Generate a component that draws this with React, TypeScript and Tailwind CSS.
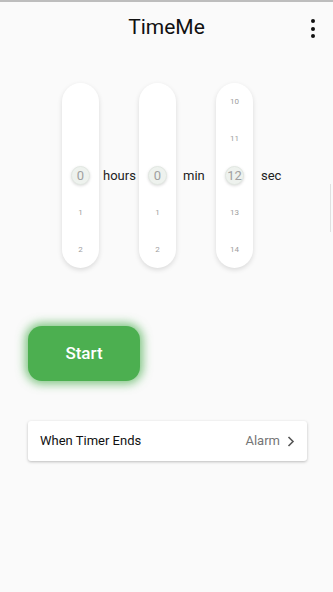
import React from 'react';

const font = { fontFamily: 'Roboto, "Noto Sans", sans-serif' };

type Col = { items: (number | null)[]; label: string; labelClass: string };

const cols: Col[] = [
    { items: [null, null, 0, 1, 2], label: 'hours', labelClass: 'pl-[4px]' },
    { items: [null, null, 0, 1, 2], label: 'min', labelClass: 'pl-[7px]' },
    { items: [10, 11, 12, 13, 14], label: 'sec', labelClass: 'pl-[8px]' },
];

const Picker: React.FC<{ col: Col }> = ({ col }) => (
    <div className="flex items-center">
        <div className="w-[37px] h-[185px] rounded-[19px] bg-white shadow-[0_2px_5px_rgba(0,0,0,0.13)] flex flex-col">
            {col.items.map((n, i) => (
                <div key={i} className="h-[37px] flex items-center justify-center">
                    {i === 2 ? (
                        <div className="w-[19px] h-[19px] rounded-full bg-[#eef2ee] border border-[#e2e8e2] shadow-[0_1px_3px_rgba(0,0,0,0.15)] flex items-center justify-center text-[13px] text-[#a0a0a0] leading-none">
                            {n}
                        </div>
                    ) : (
                        <span className="text-[8px] text-[#9e9e9e] leading-none">{n ?? ''}</span>
                    )}
                </div>
            ))}
        </div>
        <div className={`w-[40px] text-left text-[13px] text-[#212121] ${col.labelClass}`}>{col.label}</div>
    </div>
);

const App: React.FC = () => {
    return (
        <div className="relative w-[333px] h-[592px] bg-[#fafafa] overflow-hidden" style={font}>
            <div className="h-[2px] bg-[#bdbdbd]" />

            {/* App bar */}
            <div className="relative h-[52px] flex items-center justify-center">
                <span className="text-[21px] text-[#111] -mt-[1px]">TimeMe</span>
                <div className="absolute right-[18px] top-[17px] flex flex-col gap-[3.5px]">
                    <span className="w-[4px] h-[4px] rounded-full bg-[#111]" />
                    <span className="w-[4px] h-[4px] rounded-full bg-[#111]" />
                    <span className="w-[4px] h-[4px] rounded-full bg-[#111]" />
                </div>
            </div>

            {/* Pickers */}
            <div className="mt-[29px] pl-[62px] flex">
                {cols.map((c) => (
                    <Picker key={c.label} col={c} />
                ))}
            </div>

            {/* Start button */}
            <div className="mt-[58px] pl-[28px]">
                <button className="w-[112px] h-[55px] rounded-[14px] bg-[#4caf50] text-white text-[17px] font-medium shadow-[0_0_10px_3px_rgba(76,175,80,0.7)]">
                    Start
                </button>
            </div>

            {/* When timer ends */}
            <div className="mt-[40px] mx-[28px] w-[279px] h-[40px] bg-white rounded-[3px] shadow-[0_1px_3px_rgba(0,0,0,0.25)] flex items-center pl-[12px] pr-[12px]">
                <span className="text-[13px] text-[#111] flex-1">When Timer Ends</span>
                <span className="text-[13px] text-[#757575] mr-[7px]">Alarm</span>
                <svg width="8" height="11" viewBox="0 0 8 11" fill="none" stroke="#555" strokeWidth="1.6">
                    <path d="M1.5 1 L6 5.5 L1.5 10" />
                </svg>
            </div>

            {/* scroll indicator */}
            <div className="absolute left-[330px] top-[184px] w-[1px] h-[48px] bg-[#e0e0e0]" />
        </div>
    );
};

export default App;
